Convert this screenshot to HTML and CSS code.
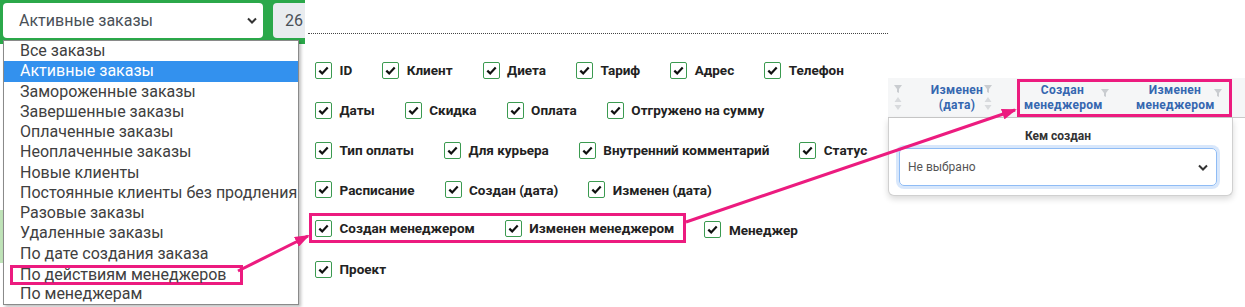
FILE: index.html
```html
<!DOCTYPE html>
<html lang="ru">
<head>
  <meta charset="UTF-8">
  <meta name="viewport" content="width=device-width, initial-scale=1.0">
  <title>Фильтры заказов</title>
  <link rel="stylesheet" href="styles.css">
</head>
<body>

<div class="page">

  <div class="left">
    <div class="topbar">
      <div class="select-main">
        <span>Активные заказы</span>
        <svg width="10" height="7" viewBox="0 0 10 7"><path d="M1 1.5 L5 5.5 L9 1.5" fill="none" stroke="#333" stroke-width="2"/></svg>
      </div>
      <div class="count-input">26</div>
    </div>
    <div class="bg-strip"></div>

    <ul class="options">
      <li>Все заказы</li>
      <li class="selected">Активные заказы</li>
      <li>Замороженные заказы</li>
      <li>Завершенные заказы</li>
      <li>Оплаченные заказы</li>
      <li>Неоплаченные заказы</li>
      <li>Новые клиенты</li>
      <li>Постоянные клиенты без продления</li>
      <li>Разовые заказы</li>
      <li>Удаленные заказы</li>
      <li>По дате создания заказа</li>
      <li><span class="mark">По действиям менеджеров</span></li>
      <li>По менеджерам</li>
    </ul>
  </div>

  <div class="columns">
    <div class="dots"></div>
    <div class="rows">
      <div class="row">
        <label class="opt"><span class="box"><svg width="11" height="9" viewBox="0 0 11 9"><path d="M1.3 4.6 L4.2 7.4 L9.7 1.6"/></svg></span>ID</label>
        <label class="opt"><span class="box"><svg width="11" height="9" viewBox="0 0 11 9"><path d="M1.3 4.6 L4.2 7.4 L9.7 1.6"/></svg></span>Клиент</label>
        <label class="opt"><span class="box"><svg width="11" height="9" viewBox="0 0 11 9"><path d="M1.3 4.6 L4.2 7.4 L9.7 1.6"/></svg></span>Диета</label>
        <label class="opt"><span class="box"><svg width="11" height="9" viewBox="0 0 11 9"><path d="M1.3 4.6 L4.2 7.4 L9.7 1.6"/></svg></span>Тариф</label>
        <label class="opt"><span class="box"><svg width="11" height="9" viewBox="0 0 11 9"><path d="M1.3 4.6 L4.2 7.4 L9.7 1.6"/></svg></span>Адрес</label>
        <label class="opt"><span class="box"><svg width="11" height="9" viewBox="0 0 11 9"><path d="M1.3 4.6 L4.2 7.4 L9.7 1.6"/></svg></span>Телефон</label>
      </div>
      <div class="row">
        <label class="opt"><span class="box"><svg width="11" height="9" viewBox="0 0 11 9"><path d="M1.3 4.6 L4.2 7.4 L9.7 1.6"/></svg></span>Даты</label>
        <label class="opt"><span class="box"><svg width="11" height="9" viewBox="0 0 11 9"><path d="M1.3 4.6 L4.2 7.4 L9.7 1.6"/></svg></span>Скидка</label>
        <label class="opt"><span class="box"><svg width="11" height="9" viewBox="0 0 11 9"><path d="M1.3 4.6 L4.2 7.4 L9.7 1.6"/></svg></span>Оплата</label>
        <label class="opt"><span class="box"><svg width="11" height="9" viewBox="0 0 11 9"><path d="M1.3 4.6 L4.2 7.4 L9.7 1.6"/></svg></span>Отгружено на сумму</label>
      </div>
      <div class="row">
        <label class="opt"><span class="box"><svg width="11" height="9" viewBox="0 0 11 9"><path d="M1.3 4.6 L4.2 7.4 L9.7 1.6"/></svg></span>Тип оплаты</label>
        <label class="opt"><span class="box"><svg width="11" height="9" viewBox="0 0 11 9"><path d="M1.3 4.6 L4.2 7.4 L9.7 1.6"/></svg></span>Для курьера</label>
        <label class="opt"><span class="box"><svg width="11" height="9" viewBox="0 0 11 9"><path d="M1.3 4.6 L4.2 7.4 L9.7 1.6"/></svg></span>Внутренний комментарий</label>
        <label class="opt"><span class="box"><svg width="11" height="9" viewBox="0 0 11 9"><path d="M1.3 4.6 L4.2 7.4 L9.7 1.6"/></svg></span>Статус</label>
      </div>
      <div class="row">
        <label class="opt"><span class="box"><svg width="11" height="9" viewBox="0 0 11 9"><path d="M1.3 4.6 L4.2 7.4 L9.7 1.6"/></svg></span>Расписание</label>
        <label class="opt"><span class="box"><svg width="11" height="9" viewBox="0 0 11 9"><path d="M1.3 4.6 L4.2 7.4 L9.7 1.6"/></svg></span>Создан (дата)</label>
        <label class="opt"><span class="box"><svg width="11" height="9" viewBox="0 0 11 9"><path d="M1.3 4.6 L4.2 7.4 L9.7 1.6"/></svg></span>Изменен (дата)</label>
      </div>
      <div class="row">
        <div class="hl">
          <label class="opt"><span class="box"><svg width="11" height="9" viewBox="0 0 11 9"><path d="M1.3 4.6 L4.2 7.4 L9.7 1.6"/></svg></span>Создан менеджером</label>
          <label class="opt"><span class="box"><svg width="11" height="9" viewBox="0 0 11 9"><path d="M1.3 4.6 L4.2 7.4 L9.7 1.6"/></svg></span>Изменен менеджером</label>
        </div>
        <label class="opt"><span class="box"><svg width="11" height="9" viewBox="0 0 11 9"><path d="M1.3 4.6 L4.2 7.4 L9.7 1.6"/></svg></span>Менеджер</label>
      </div>
      <div class="row">
        <label class="opt"><span class="box"><svg width="11" height="9" viewBox="0 0 11 9"><path d="M1.3 4.6 L4.2 7.4 L9.7 1.6"/></svg></span>Проект</label>
      </div>
    </div>
  </div>

  <div class="table-side">
    <div class="thead">
      <div class="th c1">
        <div class="th-icons">
          <svg class="funnel" width="8" height="8" viewBox="0 0 8 8"><path d="M0 0 H8 L5 4 V8 L3 7 V4 Z"/></svg>
          <svg class="sort" width="8" height="13" viewBox="0 0 8 13"><path d="M4 0 L7.5 5 H0.5 Z M4 13 L7.5 8 H0.5 Z"/></svg>
        </div>
      </div>
      <div class="th c2">
        <div class="th-text"><span>Изменен</span><span>(дата)</span></div>
        <div class="th-icons">
          <svg class="funnel" width="8" height="8" viewBox="0 0 8 8"><path d="M0 0 H8 L5 4 V8 L3 7 V4 Z"/></svg>
          <svg class="sort" width="8" height="13" viewBox="0 0 8 13"><path d="M4 0 L7.5 5 H0.5 Z M4 13 L7.5 8 H0.5 Z"/></svg>
        </div>
      </div>
      <div class="hl-head">
        <div class="th c3">
          <div class="th-text"><span>Создан</span><span>менеджером</span></div>
          <div class="th-icons">
            <svg class="funnel" width="8" height="8" viewBox="0 0 8 8"><path d="M0 0 H8 L5 4 V8 L3 7 V4 Z"/></svg>
          </div>
        </div>
        <div class="th c4">
          <div class="th-text"><span>Изменен</span><span>менеджером</span></div>
          <div class="th-icons">
            <svg class="funnel" width="8" height="8" viewBox="0 0 8 8"><path d="M0 0 H8 L5 4 V8 L3 7 V4 Z"/></svg>
          </div>
        </div>
      </div>
    </div>

    <div class="filter-pop">
      <div class="filter-title">Кем создан</div>
      <div class="filter-select">
        <span>Не выбрано</span>
        <svg width="10" height="7" viewBox="0 0 10 7"><path d="M1 1.5 L5 5.5 L9 1.5" fill="none" stroke="#333" stroke-width="2"/></svg>
      </div>
    </div>
  </div>

</div>

<svg class="arrows" width="1245" height="307" viewBox="0 0 1245 307">
  <defs>
    <marker id="head" markerWidth="15" markerHeight="11" refX="13" refY="5.5" orient="auto" markerUnits="userSpaceOnUse">
      <path d="M0 0 L15 5.5 L0 11 Z" fill="#ec1b7f"/>
    </marker>
  </defs>
  <line x1="238" y1="271" x2="308" y2="236" stroke="#ec1b7f" stroke-width="3" marker-end="url(#head)"/>
  <line x1="686" y1="222" x2="1015" y2="110" stroke="#ec1b7f" stroke-width="3" marker-end="url(#head)"/>
</svg>

</body>
</html>
```

FILE: styles.css
```css
body {
  margin: 0;
  width: 1245px;
  height: 307px;
  overflow: hidden;
  position: relative;
  background-color: #fff;
  font-family: Roboto, "Liberation Sans", sans-serif;
}
.page {
  display: flex;
  height: 307px;
}

/* left: order filter select */
.left {
  width: 305px;
  position: relative;
  flex-shrink: 0;
}
.topbar {
  height: 44px;
  background-color: #2ba84a;
  display: flex;
  gap: 10px;
  padding: 3px 0 0 3px;
  box-sizing: border-box;
}
.select-main {
  width: 260px;
  height: 35px;
  background-color: #fff;
  border-radius: 4px;
  display: flex;
  align-items: center;
  justify-content: space-between;
  padding: 0 6px 0 16px;
  box-sizing: border-box;
  font-size: 16px;
  color: #495057;
}
.count-input {
  flex: 1;
  height: 35px;
  background-color: #e9ecef;
  border-radius: 4px 0 0 4px;
  padding-left: 12px;
  line-height: 35px;
  font-size: 16px;
  color: #495057;
}
.bg-strip {
  width: 3px;
  height: 53px;
  margin-top: 166px;
  background-color: #bfe3b8;
}
.options {
  position: absolute;
  top: 40px;
  left: 3px;
  width: 296px;
  margin: 0;
  padding: 0;
  list-style: none;
  background-color: #fff;
  border: 1px solid #8a8a8a;
  box-sizing: border-box;
  box-shadow: 2px 2px 3px rgba(0, 0, 0, 0.25);
}
.options li {
  height: 20.25px;
  line-height: 20.25px;
  padding-left: 16px;
  font-size: 16px;
  color: #404040;
  white-space: nowrap;
}
.options li.selected {
  background-color: #3391ee;
  color: #fff;
}
.mark {
  display: inline-block;
  vertical-align: top;
  height: 20px;
  margin: 1px 0 0 -10px;
  padding: 0 13px 0 7px;
  line-height: 14px;
  border: 3px solid #ec1b7f;
  box-sizing: border-box;
}

/* middle: visible columns */
.columns {
  width: 583px;
  flex-shrink: 0;
  padding: 33px 0 0 10px;
  box-sizing: border-box;
}
.dots {
  margin-left: -7px;
  border-top: 1px dotted #444;
}
.rows {
  margin-top: 16.6px;
}
.row {
  display: flex;
  align-items: center;
  gap: 30px;
  height: 39.8px;
}
.opt {
  display: flex;
  align-items: center;
  gap: 7.5px;
  font-size: 13.5px;
  font-weight: 700;
  color: #222;
  white-space: nowrap;
}
.box {
  width: 17px;
  height: 17px;
  border: 1px solid #3b9a50;
  border-radius: 2px;
  box-sizing: border-box;
  display: flex;
  align-items: center;
  justify-content: center;
}
.box path {
  fill: none;
  stroke: #111;
  stroke-width: 2.2;
}
.hl {
  display: flex;
  align-items: center;
  gap: 30px;
  height: 30px;
  margin: -3px -12px 0 -6px;
  padding: 0 9px 0 3px;
  border: 3px solid #ec1b7f;
  box-sizing: border-box;
}

/* right: table header with filter popup */
.table-side {
  flex: 1;
  padding-top: 78px;
}
.thead {
  display: flex;
  align-items: center;
  height: 40px;
  background-color: #f5f6f7;
  border-bottom: 1px solid #c9c9c9;
  box-sizing: border-box;
}
.th {
  display: flex;
  align-self: stretch;
  align-items: center;
  box-sizing: border-box;
}
.th-text {
  text-align: center;
  font-size: 12px;
  font-weight: 700;
  letter-spacing: 0.3px;
  color: #3567b0;
  white-space: nowrap;
}
.th-text span {
  display: block;
  line-height: 14.2px;
}
.th-icons {
  width: 8px;
  align-self: stretch;
  display: flex;
  flex-direction: column;
  gap: 4px;
  padding-top: 7px;
  box-sizing: border-box;
}
.funnel path {
  fill: #c9ccd0;
}
.sort path {
  fill: #d8dadd;
}
.c1 {
  width: 17px;
  padding-left: 6px;
}
.c2 {
  width: 112px;
  padding: 0 25px;
}
.c2 .th-text {
  width: 54px;
}
.hl-head {
  display: flex;
  align-self: center;
  height: 38px;
  border: 3px solid #ec1b7f;
  box-sizing: border-box;
}
.c3 {
  padding-left: 4px;
}
.c3 .th-text {
  width: 77px;
}
.c4 {
  padding: 0 7px 0 27px;
}
.c4 .th-text {
  width: 78px;
}
.filter-pop {
  width: 345px;
  background-color: #fff;
  border: 1px solid #d0d0d0;
  border-top: none;
  border-radius: 0 0 6px 6px;
  box-shadow: 0 3px 6px rgba(0, 0, 0, 0.15);
  padding: 11px 15px 9px 10px;
  box-sizing: border-box;
}
.filter-title {
  text-align: center;
  font-size: 12px;
  font-weight: 700;
  line-height: 14px;
  color: #333;
}
.filter-select {
  margin-top: 5px;
  width: 318px;
  height: 38px;
  border: 1px solid #8fbcf5;
  border-radius: 5px;
  box-shadow: 0 0 0 3px rgba(100, 160, 240, 0.25);
  display: flex;
  align-items: center;
  justify-content: space-between;
  padding: 0 8px;
  box-sizing: border-box;
  font-size: 12px;
  color: #555;
}

.arrows {
  position: absolute;
  top: 0;
  left: 0;
  pointer-events: none;
}
```
